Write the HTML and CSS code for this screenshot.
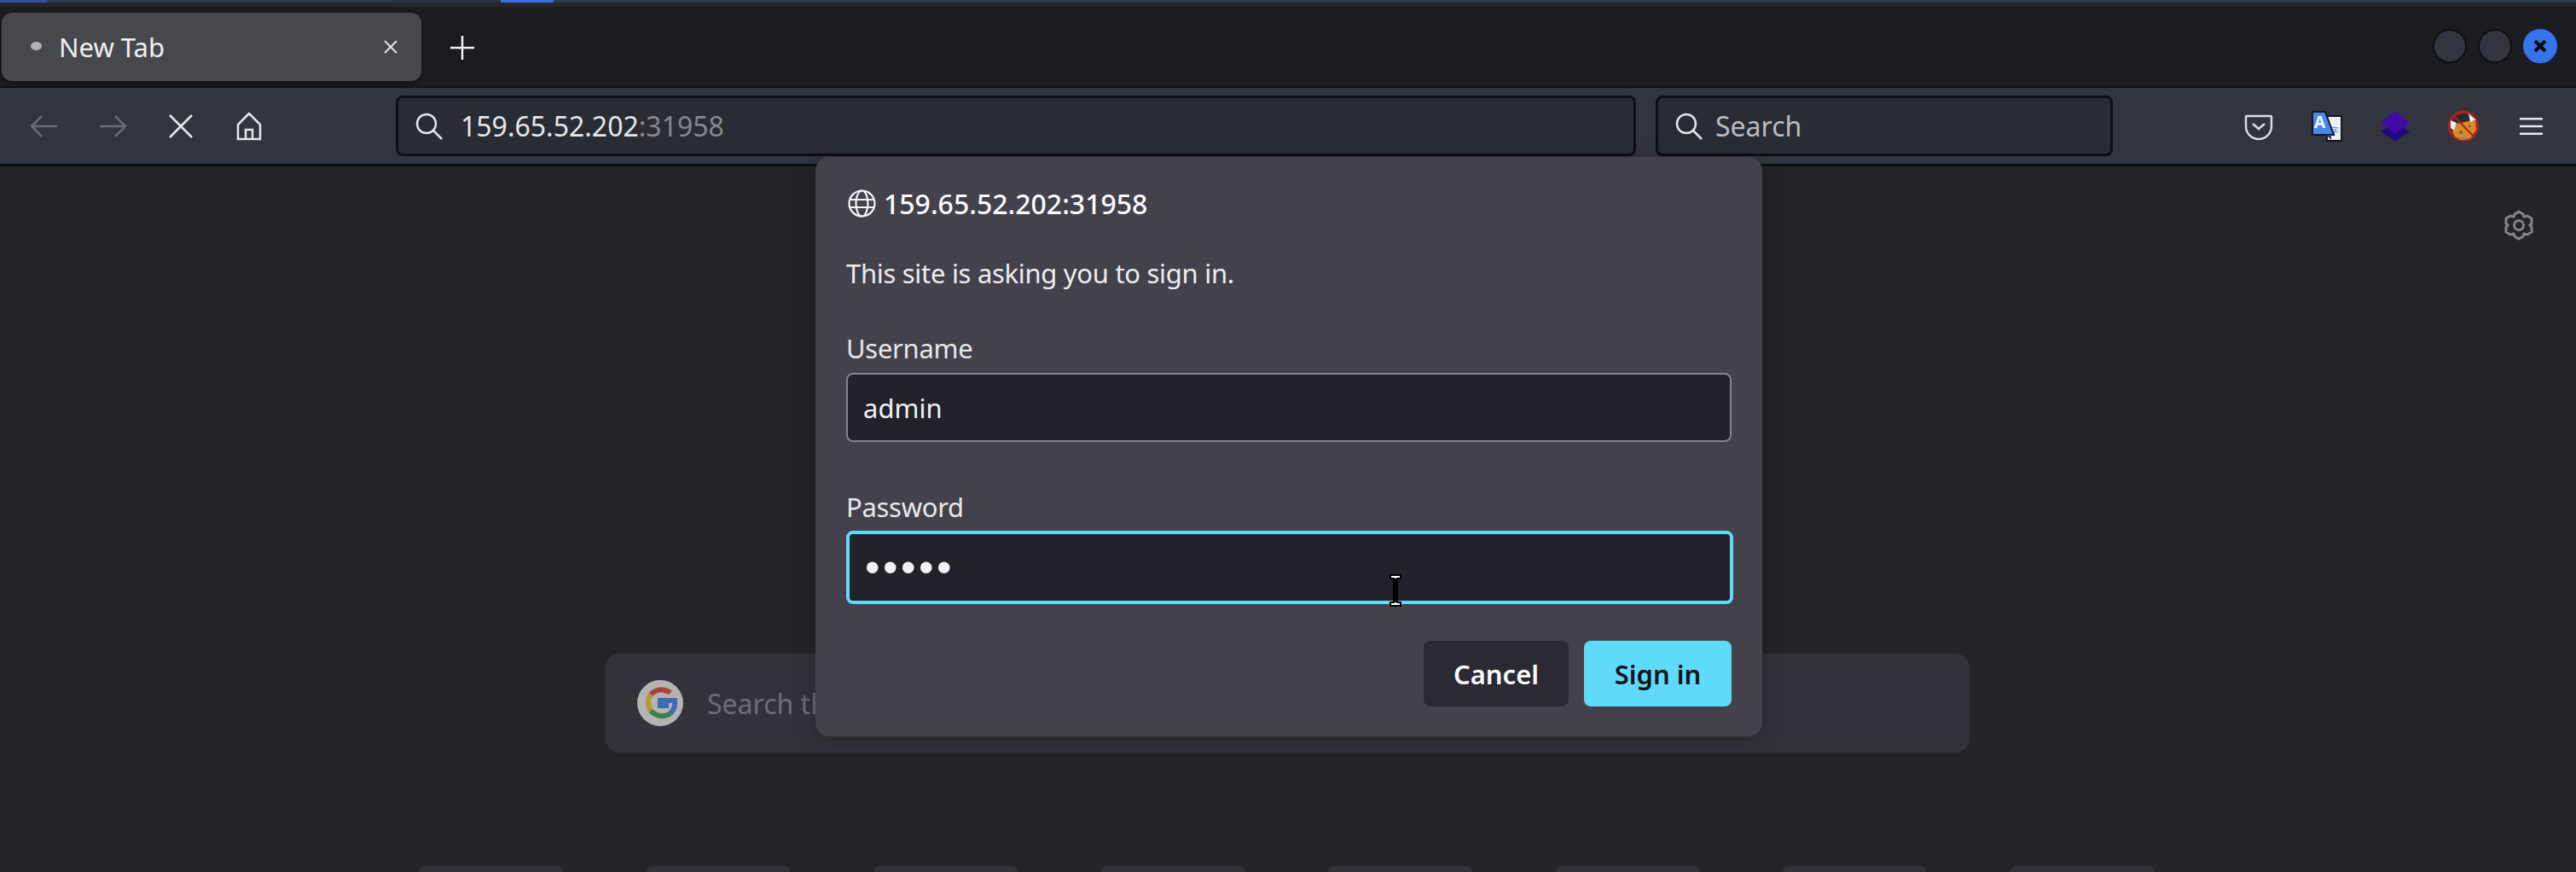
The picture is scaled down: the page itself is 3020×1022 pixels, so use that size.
FILE: index.html
```html
<!DOCTYPE html>
<html lang="en">
<head>
  <meta charset="UTF-8" />
  <title>New Tab</title>
  <link rel="stylesheet" href="styles.css">
</head>
<body>

  <div class="desktop-strip">
    <span class="seg seg-a"></span>
    <span class="seg seg-b"></span>
    <span class="seg seg-c"></span>
    <span class="seg seg-d"></span>
    <span class="seg seg-e"></span>
  </div>

  <div class="tabbar">
    <div class="tab">
      <span class="tab-dot"></span>
      <span class="tab-title">New Tab</span>
      <svg class="tab-close" viewBox="0 0 18 18"><path d="M2 2l14 14M16 2L2 16"/></svg>
    </div>
    <svg class="new-tab" viewBox="0 0 28 28"><path d="M14 0v28M0 14h28"/></svg>
    <div class="win-btns">
      <span class="win-btn"></span>
      <span class="win-btn"></span>
      <span class="win-btn win-close">
        <svg viewBox="0 0 16 16"><path d="M2 2l12 12M14 2L2 14"/></svg>
      </span>
    </div>
  </div>

  <div class="toolbar">
    <div class="nav-btns">
      <svg class="icon dim" viewBox="0 0 32 28"><path d="M1 14h30M13 2L1 14l12 12"/></svg>
      <svg class="icon dim" viewBox="0 0 32 28"><path d="M1 14h30M19 2l12 12-12 12"/></svg>
      <svg class="icon" viewBox="0 0 32 28"><path d="M3 1l26 26M29 1L3 27"/></svg>
      <svg class="icon home" viewBox="0 0 32 34"><path d="M16 2L3 15v17h26V15zM12 32V21h8v11"/></svg>
    </div>
    <div class="urlbar">
      <svg class="search-icon" viewBox="0 0 32 32"><circle cx="13" cy="13" r="11"/><path d="M21 21l10 10"/></svg>
      <span class="url-host">159.65.52.202</span><span class="url-port">:31958</span>
    </div>
    <div class="searchbar">
      <svg class="search-icon" viewBox="0 0 32 32"><circle cx="13" cy="13" r="11"/><path d="M21 21l10 10"/></svg>
      <span class="search-label">Search</span>
    </div>
    <div class="ext-btns">
      <svg class="icon ext" viewBox="0 0 36 36"><path d="M4 6h28a1 1 0 0 1 1 1v11a15 15 0 0 1-30 0V7a1 1 0 0 1 1-1z"/><path d="M11 15l7 6 7-6"/></svg>
      <svg class="ext-plain" viewBox="0 0 36 36">
        <rect x="18" y="6" width="17" height="29" fill="#eef0f4" stroke="#15171c" stroke-width="2"/>
        <text x="21" y="28" class="ext-letter-small">字</text>
        <path d="M1 1h15l10 27H1z" fill="#4a86e8" stroke="#15171c" stroke-width="2"/>
        <path d="M17 28l6 6v-6z" fill="#1c3f8a"/>
        <text x="3" y="20" class="ext-letter">A</text>
      </svg>
      <svg class="ext-plain" viewBox="0 0 36 36">
        <path d="M18 14L35 24 18 36 1 24z" fill="#1f0a7c"/>
        <path d="M18 0L35 14 18 27 1 14z" fill="#3d0ca8"/>
      </svg>
      <svg class="ext-plain" viewBox="0 0 36 36">
        <circle cx="18" cy="18" r="16.5" fill="#2a2c33" stroke="#b31f1f" stroke-width="3"/>
        <path d="M5 25l5-10 14-3 8-2 1 12-7 10-8 2-9-3z" fill="#d98a2c"/>
        <path d="M3 11l7 3-3 9-4-3zM24 3l8 7-6 3z" fill="#f2f2f2"/>
        <path d="M12 31h11l-2 3h-7z" fill="#8a8078"/>
        <circle cx="15" cy="25" r="2" fill="#6a5a44"/>
        <circle cx="25" cy="18" r="1.5" fill="#8c5a1e"/>
        <path d="M7 6l23 24" stroke="#b31f1f" stroke-width="2"/>
      </svg>
      <svg class="icon menu" viewBox="0 0 28 22"><path d="M0 2h28M0 11h28M0 20h28"/></svg>
    </div>
  </div>

  <main class="newtab">
    <div class="gear-row">
      <svg class="gear" viewBox="0 0 36 36">
        <path d="M18 2l5 3 1 3 4-1 5 3v6l-2 2 2 2v6l-5 3-4-1-1 3-5 3-5-3-1-3-4 1-5-3v-6l2-2-2-2v-6l5-3 4 1 1-3z"/>
        <circle cx="18" cy="18" r="5.5"/>
      </svg>
    </div>
    <div class="google-box">
      <svg class="google" viewBox="0 0 54 54">
        <circle cx="27" cy="27" r="27" fill="#b3b3b3"/>
        <path d="M39 15a17 17 0 0 0-23 2" fill="none" stroke="#a8453a" stroke-width="6"/>
        <path d="M16 17a17 17 0 0 0 0 19" fill="none" stroke="#b8962e" stroke-width="6"/>
        <path d="M16 36a17 17 0 0 0 23 3" fill="none" stroke="#3c8048" stroke-width="6"/>
        <path d="M39 39a17 17 0 0 0 5-15H27v6h10" fill="none" stroke="#3f6bb5" stroke-width="6"/>
      </svg>
      <span class="google-hint">Search the web</span>
    </div>
    <div class="tiles">
      <span class="tile"></span>
      <span class="tile"></span>
      <span class="tile"></span>
      <span class="tile"></span>
      <span class="tile"></span>
      <span class="tile"></span>
      <span class="tile"></span>
      <span class="tile"></span>
    </div>
  </main>

  <form class="dialog">
    <div class="dialog-host">
      <svg class="globe" viewBox="0 0 33 33">
        <circle cx="16.5" cy="16.5" r="15"/>
        <ellipse cx="16.5" cy="16.5" rx="7" ry="15"/>
        <path d="M2 12h29M2 21h29"/>
      </svg>
      <span>159.65.52.202:31958</span>
    </div>
    <p class="dialog-msg">This site is asking you to sign in.</p>
    <label class="field-label" for="username">Username</label>
    <input class="field" id="username" type="text" value="admin">
    <label class="field-label pass-label" for="password">Password</label>
    <input class="field field-focus" id="password" type="password" value="admin">
    <div class="dialog-actions">
      <button type="button" class="btn btn-cancel">Cancel</button>
      <button type="button" class="btn btn-primary">Sign in</button>
    </div>
  </form>

  <svg class="ibeam" viewBox="0 0 16 40">
    <path d="M2 2h12v4h-4v28h4v4H2v-4h4V6H2z" fill="#fff" stroke="#000" stroke-width="2"/>
    <path d="M8 6v28" stroke="#000" stroke-width="2"/>
  </svg>

</body>
</html>
```

FILE: styles.css
```css
* { box-sizing: border-box; }
html, body { height: 100%; }
body {
  margin: 0;
  position: relative;
  overflow: hidden;
  background-color: #232328;
  font-family: "Noto Sans", sans-serif;
  color: #fbfbfe;
}

/* strip of the desktop panel above the window */
.desktop-strip {
  display: flex;
  height: 3px;
  background-color: #2a3a50;
}
.seg { display: block; height: 100%; }
.seg-a { width: 55px; background-color: #2f5199; }
.seg-b { width: 405px; }
.seg-c { width: 127px; background-color: #2c3140; }
.seg-d { width: 62px; background-color: #3c6fe0; }
.seg-e { flex: 1; }

.tabbar {
  display: flex;
  align-items: flex-start;
  height: 100px;
  padding: 7px 0 0 2px;
  background-color: #1b1c21;
  border-top: 5px solid #24262c;
  border-bottom: 2px solid #111216;
}
.tab {
  display: flex;
  align-items: center;
  width: 492px;
  height: 80px;
  padding: 0 27px 0 34px;
  background-color: #47484e;
  border-radius: 12px;
  box-shadow: 0 3px 4px rgba(0,0,0,0.35);
}
.tab-dot {
  width: 13px;
  height: 10px;
  margin-top: -2px;
  border-radius: 50%;
  background-color: #b4b4b8;
}
.tab-title {
  margin-left: 20px;
  flex: 1;
  font-size: 31px;
  color: #f0f0f2;
}
.tab-close {
  width: 18px;
  height: 18px;
  margin-top: -1px;
  fill: none;
  stroke: #e4e4e6;
  stroke-width: 2;
}
.new-tab {
  width: 28px;
  height: 28px;
  margin: 27px 0 0 34px;
  fill: none;
  stroke: #f2f2f4;
  stroke-width: 2.5;
}
.win-btns {
  display: flex;
  gap: 13px;
  margin: 19px 22px 0 auto;
}
.win-btn {
  display: flex;
  align-items: center;
  justify-content: center;
  width: 40px;
  height: 40px;
  border-radius: 50%;
  background-color: #32353f;
  border: 2px solid #0e0f12;
}
.win-close { background-color: #3674ee; border-color: #3674ee; }
.win-close svg {
  width: 16px;
  height: 16px;
  fill: none;
  stroke: #07080c;
  stroke-width: 4;
}

.toolbar {
  display: flex;
  align-items: center;
  height: 92px;
  padding-left: 36px;
  background-color: #32353d;
  border-bottom: 3px solid #0e0f13;
}
.icon {
  display: block;
  fill: none;
  stroke: #e8e8ea;
  stroke-width: 2.5;
}
.icon.dim { stroke: #6a6c72; }
.nav-btns { display: flex; align-items: center; gap: 48px; }
.nav-btns .icon { width: 32px; height: 28px; }
.nav-btns .home { height: 34px; }

.urlbar, .searchbar {
  display: flex;
  align-items: center;
  height: 71px;
  padding-left: 20px;
  background-color: #292c35;
  border: 3px solid #0e0f13;
  border-radius: 8px;
  font-size: 32px;
}
.urlbar { width: 1454px; margin-left: 156px; }
.searchbar { width: 536px; margin-left: 23px; }
.search-icon {
  width: 32px;
  height: 32px;
  fill: none;
  stroke: #e6e6e8;
  stroke-width: 2.5;
}
.url-host { margin-left: 21px; color: #e6e6ea; }
.url-port { color: #85878d; }
.search-label { margin-left: 15px; color: #b9bcc2; }

.ext-btns {
  display: flex;
  align-items: center;
  gap: 44px;
  margin-left: 153px;
}
.ext-btns svg { width: 36px; height: 36px; }
.icon.ext { stroke-width: 2.5; stroke: #dcdcde; }
.ext-btns .menu { width: 27px; height: 22px; margin-left: 4px; }
.ext-plain { display: block; }
.ext-letter { font: bold 19px "Noto Sans", sans-serif; fill: #f4f7ff; }
.ext-letter-small { font: 11px "Noto Sans CJK SC", sans-serif; fill: #4a86e8; }

.newtab { padding-top: 51px; }
.gear-row { display: flex; justify-content: flex-end; padding-right: 49px; }
.gear {
  width: 36px;
  height: 36px;
  fill: none;
  stroke: #84858a;
  stroke-width: 3;
}
.google-box {
  display: flex;
  align-items: center;
  width: 1599px;
  height: 116px;
  margin: 484px 0 0 710px;
  padding-left: 37px;
  background-color: #33323a;
  border-radius: 16px;
}
.google { width: 54px; height: 54px; }
.google-hint {
  margin-left: 28px;
  font-size: 32px;
  color: #6b6d76;
}
.tiles {
  display: flex;
  justify-content: space-between;
  width: 2035px;
  margin: 133px 0 0 491px;
}
.tile {
  display: block;
  width: 169px;
  height: 7px;
  border-radius: 10px 10px 0 0;
  background-color: #33323a;
}

/* auth prompt lies over the page */
.dialog {
  position: absolute;
  top: 184px;
  left: 956px;
  width: 1110px;
  height: 679px;
  padding: 38px 36px 0;
  background-color: #42414c;
  border-radius: 16px;
  box-shadow: 0 4px 24px rgba(0,0,0,0.25);
}
.dialog-host {
  display: flex;
  align-items: center;
  gap: 9px;
  height: 33px;
  font-size: 32px;
  font-weight: 500;
  color: #fbfbfe;
}
.globe {
  width: 33px;
  height: 33px;
  margin-left: 2px;
  fill: none;
  stroke: #f4f4f6;
  stroke-width: 2.2;
}
.dialog-msg {
  margin: 45px 0 0;
  line-height: 40px;
  font-size: 31px;
  letter-spacing: -0.3px;
  color: #eeeef0;
}
.field-label {
  display: block;
  margin-top: 48px;
  line-height: 40px;
  font-size: 31px;
  letter-spacing: -0.3px;
  color: #e8e8ea;
}
.pass-label { margin-top: 56px; }
.field {
  display: block;
  width: 100%;
  height: 81px;
  margin-top: 9px;
  padding: 0 18px;
  background-color: #23222b;
  border: 2px solid #85858b;
  border-radius: 8px;
  outline: none;
  font-family: "Noto Sans", sans-serif;
  font-size: 31px;
  color: #f2f2f4;
}
.field-focus {
  width: 1040px;
  height: 86px;
  margin-top: 8px;
  border: 4px solid #5fdafb;
  font-family: "Liberation Sans", sans-serif;
  font-size: 50px;
  letter-spacing: 3.5px;
}
.dialog-actions {
  display: flex;
  justify-content: flex-end;
  gap: 18px;
  margin-top: 43px;
}
.btn {
  height: 77px;
  padding: 0;
  border: none;
  border-radius: 8px;
  font-family: "Noto Sans", sans-serif;
  font-size: 31px;
  font-weight: 600;
}
.btn-cancel { width: 170px; background-color: #2b2a33; color: #fbfbfe; }
.btn-primary { width: 173px; background-color: #5fdafb; color: #15141a; }

.ibeam {
  position: absolute;
  top: 672px;
  left: 1628px;
  width: 16px;
  height: 40px;
}
```
